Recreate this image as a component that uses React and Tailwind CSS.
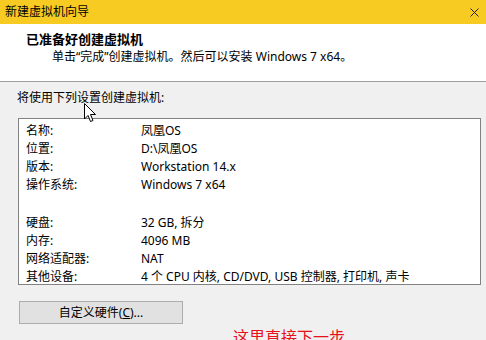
const rows = [
    ['名称:', '凤凰OS'],
    ['位置:', 'D:\\凤凰OS'],
    ['版本:', 'Workstation 14.x'],
    ['操作系统:', 'Windows 7 x64'],
    null,
    ['硬盘:', '32 GB, 拆分'],
    ['内存:', '4096 MB'],
    ['网络适配器:', 'NAT'],
    ['其他设备:', '4 个 CPU 内核, CD/DVD, USB 控制器, 打印机, 声卡'],
]

function Cursor() {
    return (
        <svg className="absolute left-[84px] top-[103px]" width="13" height="20" viewBox="0 0 13 20">
            <path d="M0.5 0.5 L0.5 16 L4 12.5 L6.5 18.5 L9 17.5 L6.5 11.5 L11.5 11.5 Z" fill="#ffffff" stroke="#000000" strokeWidth="1" />
        </svg>
    )
}

function App() {
    return (
        <div
            className="relative flex h-[340px] w-[486px] flex-col overflow-hidden bg-[#f0f0f0] text-[12px] text-black"
            style={{ fontFamily: '"Noto Sans", "Noto Sans CJK SC", sans-serif' }}
        >
            <div className="flex h-[24px] shrink-0 items-center justify-between bg-[#f7cb22] pl-[5px] pr-[7px]">
                <span className="leading-none">新建虚拟机向导</span>
                <svg width="9" height="9" viewBox="0 0 9 9">
                    <path d="M0.5 0.5 L8.5 8.5 M8.5 0.5 L0.5 8.5" stroke="#222" strokeWidth="1" />
                </svg>
            </div>

            <div className="flex h-[58px] shrink-0 flex-col border-b border-[#a0a0a0] bg-white pl-[26px] pt-[7px]">
                <p className="text-[13px] font-bold leading-[17px]">已准备好创建虚拟机</p>
                <p className="ml-[26px] leading-[17px]">单击“完成”创建虚拟机。然后可以安装 Windows 7 x64。</p>
            </div>

            <p className="ml-[17px] mt-[7px] shrink-0 leading-[18px]">将使用下列设置创建虚拟机:</p>

            <div className="ml-[18px] mt-[11px] h-[167px] w-[463px] shrink-0 border border-[#828282] bg-white pl-[7px] pt-[3px]">
                {rows.map((row, i) =>
                    row ? (
                        <div key={i} className="flex h-[18px] items-center">
                            <span className="w-[115px]">{row[0]}</span>
                            <span>{row[1]}</span>
                        </div>
                    ) : (
                        <div key={i} className="h-[20px]" />
                    )
                )}
            </div>

            <div className="ml-[19px] mt-[16px] flex h-[23px] w-[164px] shrink-0 items-center justify-center border border-[#adadad] bg-[#e1e1e1]">
                自定义硬件(<span className="underline">C</span>)...
            </div>

            <p className="ml-[233px] mt-[3px] shrink-0 text-[16px] leading-[20px] text-[#e8101a]">这里直接下一步</p>

            <Cursor />
        </div>
    )
}

export default App
